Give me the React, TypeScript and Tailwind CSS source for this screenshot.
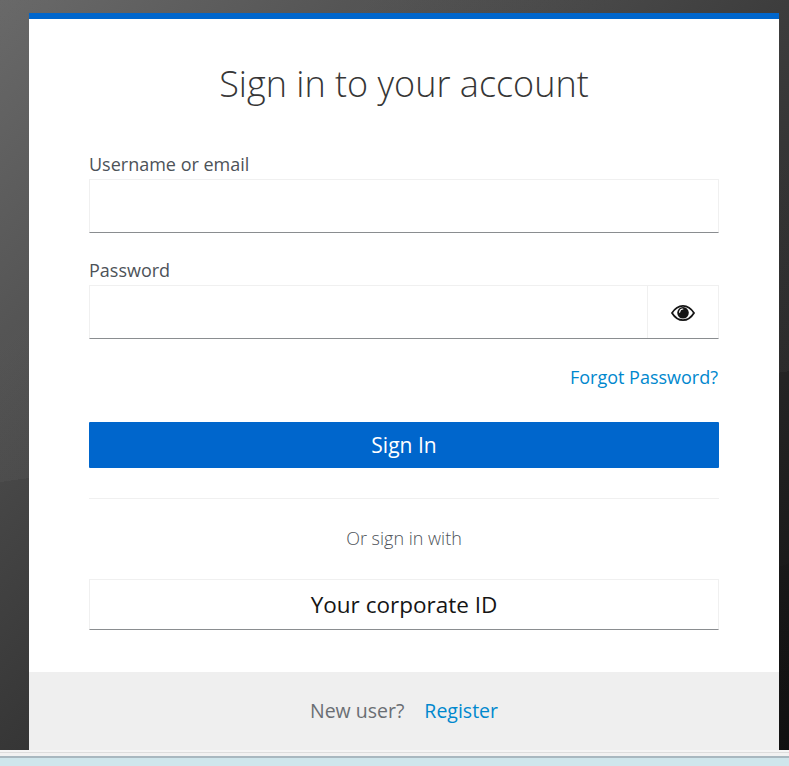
import React from 'react';

const EyeIcon: React.FC = () => (
  <svg width="24" height="18" viewBox="0 0 24 18" className="text-[#151515] translate-y-[1px]">
    <path d="M1 9C4 4.2 7.8 1.8 12 1.8S20 4.2 23 9C20 13.8 16.2 16.2 12 16.2S4 13.8 1 9Z" fill="none" stroke="currentColor" strokeWidth="1.8" />
    <circle cx="12" cy="8.8" r="5.8" fill="currentColor" />
    <path d="M8.6 8.2C8.8 6.4 10 5.2 11.8 5" fill="none" stroke="#ffffff" strokeWidth="1.2" strokeLinecap="round" />
  </svg>
);

const App: React.FC = () => {
  return (
    <div className="w-[789px] h-[766px] overflow-hidden flex flex-col bg-[#cfe6ec] font-['Open_Sans',sans-serif]">
      {/* Dark backdrop with faint facets */}
      <div className="h-[750px] shrink-0 pl-[29px] pt-[13px] bg-[linear-gradient(172deg,rgba(255,255,255,0.03)_0%,rgba(255,255,255,0.03)_56%,rgba(0,0,0,0)_56%),linear-gradient(160deg,rgba(0,0,0,0)_0%,rgba(0,0,0,0)_82%,rgba(0,0,0,0.08)_82%),linear-gradient(to_bottom_right,#646464,#373737_50%,#111111)]">
        <div className="w-[750px] h-[737px] flex flex-col bg-white border-t-[6px] border-[#0066cc]">
          <div className="flex-1 px-[60px]">
            <h1 className="mt-[38px] h-[54px] text-center text-[36px] leading-[54px] font-light text-[#363636]">
              Sign in to your account
            </h1>

            <label className="block mt-[41px] h-[24px] text-[18px] leading-[24px] text-[#4d5258]">Username or email</label>
            <div className="mt-[3px] h-[54px] border border-[#f0f0f0] border-b-[#8a8d90]" />

            <label className="block mt-[25px] h-[24px] text-[18px] leading-[24px] text-[#4d5258]">Password</label>
            <div className="mt-[3px] h-[54px] flex border border-[#f0f0f0] border-b-[#8a8d90]">
              <div className="flex-1" />
              <div className="w-[71px] flex items-center justify-center border-l border-[#f0f0f0]">
                <EyeIcon />
              </div>
            </div>

            <div className="mt-[26px] pr-[1px] text-right">
              <a className="text-[18px] leading-[24px] text-[#0088ce]">Forgot Password?</a>
            </div>

            <button className="block w-full mt-[32px] h-[46px] rounded-[1px] bg-[#0066cc] text-white text-[21px] leading-[46px]">
              Sign In
            </button>

            <div className="mt-[30px] border-t border-[#f0f0f0]" />
            <div className="mt-[27px] h-[24px] text-center text-[18px] leading-[24px] font-light text-[#4d5258]">Or sign in with</div>

            <div className="mt-[29px] h-[51px] flex items-center justify-center border border-[#f0f0f0] border-b-[#8a8d90] text-[22.5px] text-[#151515]">
              Your corporate ID
            </div>
          </div>

          {/* Footer */}
          <div className="h-[78px] shrink-0 flex items-center justify-center gap-[20px] bg-[#efefef] text-[19.5px]">
            <span className="text-[#6a6e73]">New user?</span>
            <a className="text-[#0088ce]">Register</a>
          </div>
        </div>
      </div>

      {/* Page strip below the card */}
      <div className="h-[2px] shrink-0 bg-[#f5f5f5]" />
      <div className="h-[4px] shrink-0 bg-[#f2f2f2] border-t border-[#dddddd]" />
      <div className="h-[2px] shrink-0 bg-[#a9b8c0]" />
      <div className="flex-1 bg-[#cfe6ec]" />
    </div>
  );
};

export default App;
